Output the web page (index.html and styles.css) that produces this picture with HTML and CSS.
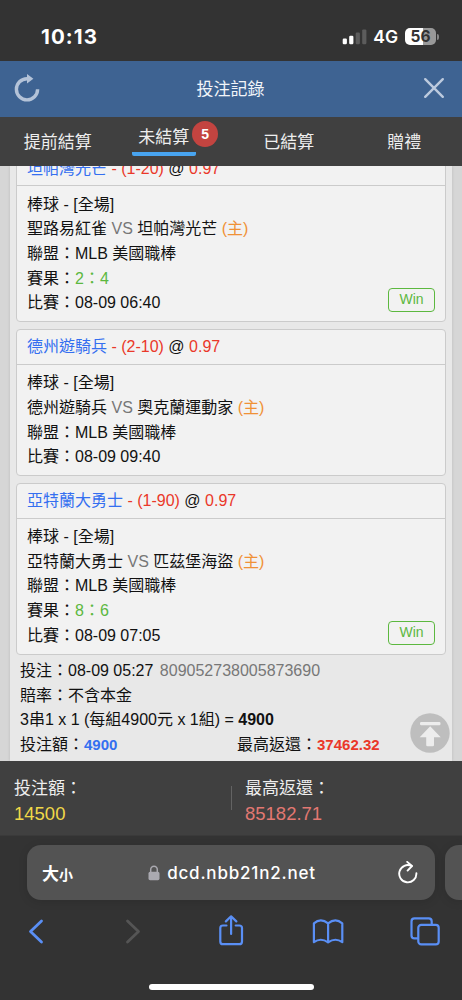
FILE: index.html
```
<!DOCTYPE html>
<html lang="zh-Hant">

<head>
    <meta charset="UTF-8">
    <meta name="viewport" content="width=device-width, initial-scale=1.0">
    <title>投注記錄</title>
    <link rel="stylesheet" href="styles.css">
</head>

<body>

    <div class="status-bar">
        <span class="time">10:13</span>
        <div class="status-icons">
            <svg width="25" height="16" viewBox="0 0 25 16">
                <rect x="0.7" y="9.5" width="4.2" height="5.8" rx="1.2" fill="#fff" />
                <rect x="7.2" y="6.8" width="4.2" height="8.5" rx="1.2" fill="#fff" />
                <rect x="13.7" y="3.6" width="4.2" height="11.7" rx="1.2" fill="#5c5c5c" />
                <rect x="20.2" y="0.4" width="4.2" height="14.9" rx="1.2" fill="#5c5c5c" />
            </svg>
            <span class="network">4G</span>
            <div class="battery">56</div>
            <span class="battery-tip"></span>
        </div>
    </div>

    <header class="header">
        <svg width="26" height="28" viewBox="0 0 26 28" fill="none">
            <path d="M13 4.7A10.6 10.6 0 1 0 23.6 15.3" stroke="#b4c3d8" stroke-width="3.4" />
            <path d="M13 0L19.4 4.7L13 9.4Z" fill="#b4c3d8" />
        </svg>
        <h1>投注記錄</h1>
        <svg width="26" height="28" viewBox="0 0 26 28" fill="none">
            <path d="M4.2 5.2L21.8 22.8M21.8 5.2L4.2 22.8" stroke="#bccade" stroke-width="2.4" stroke-linecap="round" />
        </svg>
    </header>

    <nav class="tabs">
        <a class="tab">提前結算</a>
        <a class="tab active"><span class="tab-label">未結算</span><span class="badge">5</span></a>
        <a class="tab">已結算</a>
        <a class="tab">贈禮</a>
    </nav>

    <main class="content">
        <div class="ticket">
            <div class="card first">
                <div class="card-head"><span class="blue">坦帕灣光芒</span> <span class="red">- (1-20)</span> @ <span class="red">0.97</span></div>
                <div class="card-body">
                    <p>棒球 - [全場]</p>
                    <p>聖路易紅雀 <span class="gray">VS</span> 坦帕灣光芒 <span class="orange">(主)</span></p>
                    <p>聯盟：MLB 美國職棒</p>
                    <p>賽果：<span class="green">2：4</span></p>
                    <p class="match">比賽：08-09 06:40<span class="win">Win</span></p>
                </div>
            </div>

            <div class="card">
                <div class="card-head"><span class="blue">德州遊騎兵</span> <span class="red">- (2-10)</span> @ <span class="red">0.97</span></div>
                <div class="card-body">
                    <p>棒球 - [全場]</p>
                    <p>德州遊騎兵 <span class="gray">VS</span> 奧克蘭運動家 <span class="orange">(主)</span></p>
                    <p>聯盟：MLB 美國職棒</p>
                    <p>比賽：08-09 09:40</p>
                </div>
            </div>

            <div class="card">
                <div class="card-head"><span class="blue">亞特蘭大勇士</span> <span class="red">- (1-90)</span> @ <span class="red">0.97</span></div>
                <div class="card-body">
                    <p>棒球 - [全場]</p>
                    <p>亞特蘭大勇士 <span class="gray">VS</span> 匹茲堡海盜 <span class="orange">(主)</span></p>
                    <p>聯盟：MLB 美國職棒</p>
                    <p>賽果：<span class="green">8：6</span></p>
                    <p class="match">比賽：08-09 07:05<span class="win">Win</span></p>
                </div>
            </div>

            <div class="bet-info">
                <p>投注：08-09 05:27 <span class="bet-id">809052738005873690</span></p>
                <p>賠率：不含本金</p>
                <p>3串1 x 1 (每組4900元 x 1組) = <b>4900</b></p>
                <p class="bet-sum">
                    <span>投注額：<b class="blue">4900</b></span>
                    <span>最高返還：<b class="red">37462.32</b></span>
                </p>
            </div>
        </div>

        <!-- botão voltar ao topo -->
        <a class="to-top">
            <svg width="40" height="40" viewBox="0 0 40 40">
                <circle cx="20" cy="20" r="19.7" fill="#bebebe" />
                <rect x="10" y="9" width="20.5" height="3.2" rx="1.2" fill="#ededed" />
                <path d="M20.2 13.2L30.7 24.3H24V32Q24 33.3 22.7 33.3H17.5Q16.2 33.3 16.2 32V24.3H9.7Z" fill="#ededed" />
            </svg>
        </a>
    </main>

    <footer class="total">
        <div class="total-item">
            <p>投注額：</p>
            <p class="yellow">14500</p>
        </div>
        <div class="total-item">
            <p>最高返還：</p>
            <p class="pink">85182.71</p>
        </div>
    </footer>

    <div class="browser">
        <div class="address-row">
            <div class="address">
                <span class="text-size">大<small>小</small></span>
                <div class="url">
                    <svg width="12" height="16" viewBox="0 0 12 16">
                        <path d="M2.7 8V4.7a3.3 3.5 0 0 1 6.6 0V8" fill="none" stroke="#aaa9b0" stroke-width="1.5" />
                        <rect x="0.5" y="6.8" width="11" height="8.4" rx="1.6" fill="#aaa9b0" />
                    </svg>
                    <span>dcd.nbb21n2.net</span>
                </div>
                <svg width="20" height="24" viewBox="0 0 20 24" fill="none" stroke="#fff" stroke-width="1.9" stroke-linecap="round" stroke-linejoin="round">
                    <path d="M13.6 5A8.6 8.6 0 1 0 18.4 12.3" />
                    <path d="M9.2 0.9L14 5L9.6 9.6" />
                </svg>
            </div>
            <div class="address next"></div>
        </div>

        <div class="toolbar">
            <svg width="32" height="32" viewBox="0 0 32 32" class="icon">
                <path d="M21.5 6L10.5 16.5L21.5 27" stroke-width="2.8" />
            </svg>
            <svg width="32" height="32" viewBox="0 0 32 32" class="icon disabled">
                <path d="M10.5 6L21.5 16.5L10.5 27" stroke-width="2.8" />
            </svg>
            <svg width="32" height="32" viewBox="0 0 32 32" class="icon">
                <path d="M11.5 10.5H8Q5.3 10.5 5.3 13V26.4Q5.3 29.2 8 29.2H24.2Q27 29.2 27 26.4V13Q27 10.5 24.2 10.5H20.7" />
                <path d="M16.1 18.9V1.5M10.9 6.4L16.1 1.3L21.3 6.4" />
            </svg>
            <svg width="32" height="32" viewBox="0 0 32 32" class="icon">
                <path d="M16.1 8.4V27.4Q8.8 22.2 1.9 27.2V8.3Q8.8 2.4 16.1 8.4Q23.4 2.4 30.3 8.3V27.2Q23.4 22.2 16.1 27.4" />
            </svg>
            <svg width="32" height="32" viewBox="0 0 32 32" class="icon">
                <rect x="9.3" y="9.8" width="20.4" height="19.6" rx="3" />
                <path d="M8.5 23.4H5.5Q2.5 23.4 2.5 20.4V6.4Q2.5 3.4 5.5 3.4H19.7Q22.7 3.4 22.7 6.4V9" />
            </svg>
        </div>

        <div class="home-indicator"></div>
    </div>

</body>

</html>
```
FILE: styles.css
```
* {
    box-sizing: border-box;
}

body {
    margin: 0;
    width: 462px;
    height: 1000px;
    display: flex;
    flex-direction: column;
    overflow: hidden;
    background-color: #333;
    font-family: "Liberation Sans", "Noto Sans CJK TC", sans-serif;
    font-size: 16px;
    color: #111;
}

p,
h1 {
    margin: 0;
    font-weight: normal;
}

/* barra de status */
.status-bar {
    height: 61px;
    flex: none;
    display: flex;
    justify-content: space-between;
    padding: 12px 23px 0 41px;
    align-items: center;
    color: #fff;
    font-family: Inter, sans-serif;
}

.time {
    font-size: 20.5px;
    font-weight: 700;
    letter-spacing: 1.1px;
}

.status-icons {
    display: flex;
    align-items: center;
}

.network {
    margin: 0 7px 0 6px;
    font-size: 17.5px;
    font-weight: 600;
}

.battery {
    width: 31px;
    height: 17px;
    border-radius: 5px;
    background: linear-gradient(90deg, #fff 57%, #999 57%);
    color: #333;
    font-size: 15.5px;
    font-weight: 700;
    line-height: 17px;
    text-align: center;
}

.battery-tip {
    width: 2px;
    height: 6px;
    margin-left: 1px;
    border-radius: 0 2px 2px 0;
    background-color: #888;
}

.header {
    height: 56px;
    flex: none;
    display: flex;
    align-items: center;
    justify-content: space-between;
    padding: 0 15px 2px 14px;
    background-color: #3e6392;
}

.header h1 {
    margin-top: -2px;
    font-size: 17px;
    color: #f2f5f9;
}

/* abas */
.tabs {
    height: 49px;
    flex: none;
    display: grid;
    grid-template-columns: repeat(4, 1fr);
    background-color: #404040;
    color: #eee;
    font-size: 17px;
}

.tab {
    display: flex;
    align-items: center;
    justify-content: center;
    padding-bottom: 2px;
}

.tab.active {
    align-items: flex-start;
    padding: 0 0 0 4px;
}

.tab-label {
    height: 39px;
    padding: 1px 7px 0 6px;
    line-height: 39px;
    border-bottom: 4px solid #48a4f0;
    border-radius: 2px;
}

.badge {
    width: 26px;
    height: 26px;
    margin: 4px 0 0 -4px;
    border-radius: 50%;
    background-color: #c34440;
    color: #fff;
    font-size: 14px;
    font-weight: bold;
    line-height: 26px;
    text-align: center;
}

/* conteúdo */
.content {
    height: 595px;
    flex: none;
    position: relative;
    overflow: hidden;
    padding: 0 10px;
    background-color: #d6d6d6;
}

.ticket {
    height: 595px;
    overflow: hidden;
    padding: 0 6px;
    background-color: #e8e8e8;
    box-shadow: 0 0 3px rgba(0, 0, 0, 0.12);
    line-height: 24.6px;
}

.card {
    margin-bottom: 7px;
    border: 1px solid #cbcbcb;
    border-radius: 4px;
    background-color: #f2f2f2;
}

.card.first {
    margin-top: -15.4px;
}

.card-head {
    height: 34.4px;
    padding: 0 10px;
    border-bottom: 1px solid #cbcbcb;
    line-height: 34px;
}

.card-body {
    padding: 6.8px 10px 5.4px;
}

.match {
    display: flex;
    justify-content: space-between;
    height: 24.6px;
}

.win {
    width: 47px;
    height: 24px;
    margin-top: -3px;
    border: 1px solid #5cb83f;
    border-radius: 4px;
    color: #5cb83f;
    font-size: 14px;
    line-height: 21px;
    text-align: center;
}

.bet-info {
    margin-top: -2.4px;
    padding: 0 4px;
}

.bet-id {
    margin-left: 2px;
    color: #777;
}

.bet-sum {
    display: grid;
    grid-template-columns: 217px 1fr;
}

.bet-sum b {
    font-size: 15px;
}

.blue {
    color: #346ff0;
}

.red {
    color: #ea3829;
}

.green {
    color: #5cb83f;
}

.gray {
    color: #777;
}

.orange {
    color: #f09136;
}

.to-top {
    position: absolute;
    right: 12px;
    bottom: 8px;
    height: 40px;
}

/* totais */
.total {
    height: 74px;
    flex: none;
    display: grid;
    grid-template-columns: 1fr 1fr;
    align-items: center;
    background-color: #404040;
    color: #eee;
    font-size: 17px;
}

.total-item {
    padding: 5px 14px 0;
    line-height: 25px;
}

.total-item p:last-child {
    font-size: 18.5px;
}

.total-item + .total-item {
    background: linear-gradient(#636363, #636363) 0 50% / 1px 24px no-repeat;
}

.yellow {
    color: #f0d848;
}

.pink {
    color: #e27872;
}

/* navegador */
.browser {
    flex: 1;
    border-top: 1px solid #3a3a3a;
    background-color: #333;
}

.address-row {
    display: flex;
    gap: 10px;
    margin-top: 9px;
    padding-left: 27px;
}

.address {
    width: 408px;
    height: 55px;
    flex: none;
    display: flex;
    align-items: center;
    justify-content: space-between;
    padding: 0 17px 0 15px;
    border-radius: 14px;
    background-color: #535353;
    box-shadow: 0 2px 10px rgba(0, 0, 0, 0.12);
    color: #fff;
}

.address.next {
    width: 17px;
    padding: 0;
    border-radius: 14px 0 0 14px;
}

.text-size {
    width: 34px;
    font-size: 17px;
    font-weight: bold;
    white-space: nowrap;
}

.text-size small {
    font-size: 14px;
}

.url {
    display: flex;
    align-items: center;
    gap: 7px;
    margin-right: 10px;
    font-family: Inter, sans-serif;
    font-size: 17px;
    font-weight: 500;
    letter-spacing: 0.8px;
}

.toolbar {
    display: flex;
    justify-content: space-between;
    margin-top: 15px;
    padding: 0 21px 0 20px;
}

.icon {
    fill: none;
    stroke: #5a8ff5;
    stroke-width: 2.2;
    stroke-linecap: round;
    stroke-linejoin: round;
}

.icon.disabled {
    stroke: #555;
}

.home-indicator {
    width: 165px;
    height: 6px;
    margin: 37px 0 0 149px;
    border-radius: 3px;
    background-color: #fff;
}
```
